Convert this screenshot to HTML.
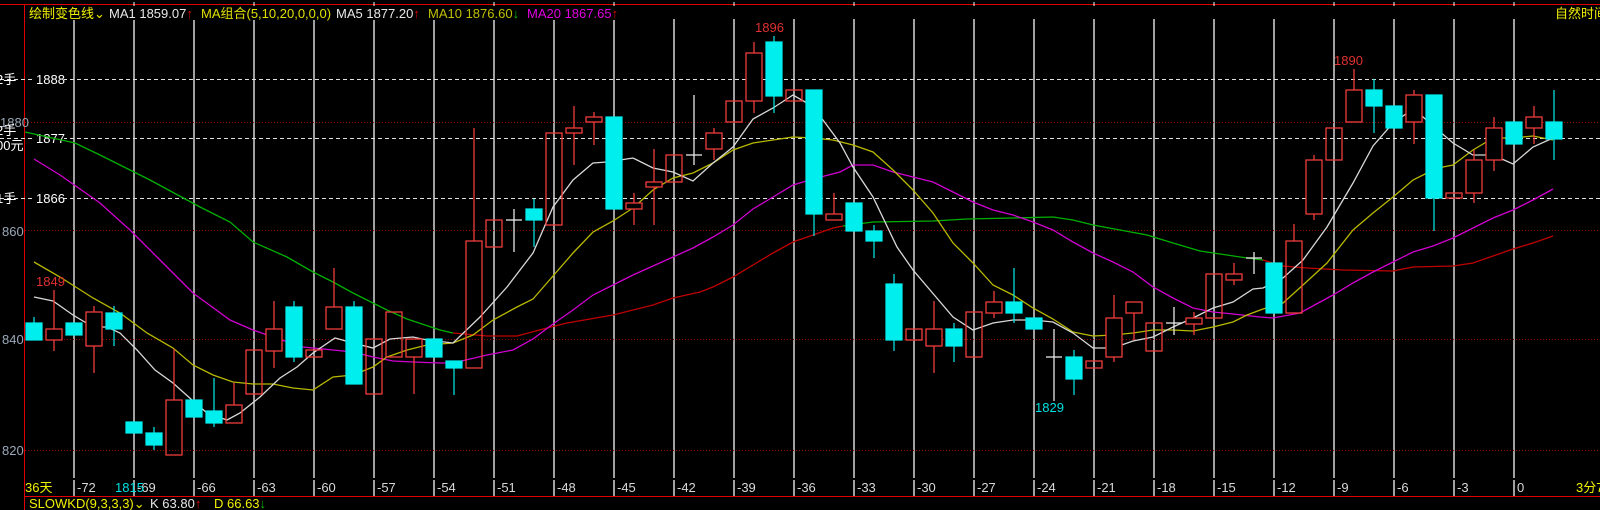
<!DOCTYPE html>
<html><head><meta charset="utf-8"><style>
html,body{margin:0;padding:0;background:#000;}
svg{display:block}
text{font-family:"Liberation Sans","Noto Sans CJK SC",sans-serif;font-size:12.5px}
</style></head><body>
<svg width="1600" height="510" viewBox="0 0 1600 510" xmlns="http://www.w3.org/2000/svg">
<rect width="1600" height="510" fill="#000"/>
<line x1="0" y1="4.5" x2="1600" y2="4.5" stroke="#e00000" stroke-width="1"/>
<line x1="24.5" y1="4" x2="24.5" y2="510" stroke="#e00000" stroke-width="1"/>
<line x1="24" y1="496.5" x2="1600" y2="496.5" stroke="#e00000" stroke-width="1"/>
<g stroke="#c8c8c8" stroke-width="1.6">
<line x1="74" y1="19" x2="74" y2="478"/><line x1="134" y1="19" x2="134" y2="478"/><line x1="194" y1="19" x2="194" y2="478"/><line x1="254" y1="19" x2="254" y2="478"/><line x1="314" y1="19" x2="314" y2="478"/><line x1="374" y1="19" x2="374" y2="478"/><line x1="434" y1="19" x2="434" y2="478"/><line x1="494" y1="19" x2="494" y2="478"/><line x1="554" y1="19" x2="554" y2="478"/><line x1="614" y1="19" x2="614" y2="478"/><line x1="674" y1="19" x2="674" y2="478"/><line x1="734" y1="19" x2="734" y2="478"/><line x1="794" y1="19" x2="794" y2="478"/><line x1="854" y1="19" x2="854" y2="478"/><line x1="914" y1="19" x2="914" y2="478"/><line x1="974" y1="19" x2="974" y2="478"/><line x1="1034" y1="19" x2="1034" y2="478"/><line x1="1094" y1="19" x2="1094" y2="478"/><line x1="1154" y1="19" x2="1154" y2="478"/><line x1="1214" y1="19" x2="1214" y2="478"/><line x1="1274" y1="19" x2="1274" y2="478"/><line x1="1334" y1="19" x2="1334" y2="478"/><line x1="1394" y1="19" x2="1394" y2="478"/><line x1="1454" y1="19" x2="1454" y2="478"/><line x1="1514" y1="19" x2="1514" y2="478"/>
</g>
<g stroke="#c8c8c8" stroke-width="1.6">
<line x1="74" y1="480" x2="74" y2="496"/><line x1="134" y1="480" x2="134" y2="496"/><line x1="194" y1="480" x2="194" y2="496"/><line x1="254" y1="480" x2="254" y2="496"/><line x1="314" y1="480" x2="314" y2="496"/><line x1="374" y1="480" x2="374" y2="496"/><line x1="434" y1="480" x2="434" y2="496"/><line x1="494" y1="480" x2="494" y2="496"/><line x1="554" y1="480" x2="554" y2="496"/><line x1="614" y1="480" x2="614" y2="496"/><line x1="674" y1="480" x2="674" y2="496"/><line x1="734" y1="480" x2="734" y2="496"/><line x1="794" y1="480" x2="794" y2="496"/><line x1="854" y1="480" x2="854" y2="496"/><line x1="914" y1="480" x2="914" y2="496"/><line x1="974" y1="480" x2="974" y2="496"/><line x1="1034" y1="480" x2="1034" y2="496"/><line x1="1094" y1="480" x2="1094" y2="496"/><line x1="1154" y1="480" x2="1154" y2="496"/><line x1="1214" y1="480" x2="1214" y2="496"/><line x1="1274" y1="480" x2="1274" y2="496"/><line x1="1334" y1="480" x2="1334" y2="496"/><line x1="1394" y1="480" x2="1394" y2="496"/><line x1="1454" y1="480" x2="1454" y2="496"/><line x1="1514" y1="480" x2="1514" y2="496"/>
</g>
<g stroke="#ffffff" stroke-width="1">
<line x1="134" y1="2" x2="134" y2="6"/><line x1="254" y1="2" x2="254" y2="6"/><line x1="374" y1="2" x2="374" y2="6"/><line x1="494" y1="2" x2="494" y2="6"/><line x1="614" y1="2" x2="614" y2="6"/><line x1="734" y1="2" x2="734" y2="6"/><line x1="854" y1="2" x2="854" y2="6"/><line x1="974" y1="2" x2="974" y2="6"/><line x1="1094" y1="2" x2="1094" y2="6"/><line x1="1214" y1="2" x2="1214" y2="6"/><line x1="1334" y1="2" x2="1334" y2="6"/><line x1="1394" y1="2" x2="1394" y2="6"/><line x1="1454" y1="2" x2="1454" y2="6"/><line x1="1514" y1="2" x2="1514" y2="6"/>
</g>
<g stroke="#900000" stroke-width="1" stroke-dasharray="1,2">
<line x1="25" y1="122.5" x2="1600" y2="122.5"/><line x1="25" y1="230.5" x2="1600" y2="230.5"/><line x1="25" y1="339.5" x2="1600" y2="339.5"/><line x1="25" y1="450.5" x2="1600" y2="450.5"/>
</g>
<g stroke="#e0e0e0" stroke-width="1" stroke-dasharray="4,3">
<line x1="0" y1="79.5" x2="1600" y2="79.5"/><line x1="0" y1="138.5" x2="1600" y2="138.5"/><line x1="0" y1="198.5" x2="1600" y2="198.5"/>
</g>
<g fill="#9aa8b8">
<text x="0" y="127" style="font-size:13px">1880</text>
<text x="2" y="236" style="font-size:13px">860</text>
<text x="2" y="344" style="font-size:13px">840</text>
<text x="2" y="455" style="font-size:13px">820</text>
</g>
<g fill="#ffffff">
<text x="-4" y="84" style="font-size:13px">2手</text>
<text x="-4" y="135" style="font-size:13px">2手</text>
<text x="-4" y="150" style="font-size:13px">00元</text>
<text x="-4" y="203" style="font-size:13px">1手</text>
<rect x="34" y="72" width="30" height="14" fill="#000"/>
<rect x="34" y="131" width="30" height="14" fill="#000"/>
<rect x="34" y="191" width="30" height="14" fill="#000"/>
<text x="36" y="84" style="font-size:13px">1888</text>
<text x="36" y="143" style="font-size:13px">1877</text>
<text x="36" y="203" style="font-size:13px">1866</text>
</g>
<g fill="none" stroke-width="1.3">
<polyline stroke="#00b000" points="25,132 75,143 100,155 150,180 200,207 230,222 253,242 287,257 313,272 333,282 353,293 373,303 387,310 407,319 440,330 453,333"/>
<polyline stroke="#c00000" points="453,333 487,336 517,336 547,328 567,323 613,315 653,305 673,298 700,292 713,287 733,277 753,265 773,253 793,242 813,235 833,228 843,226"/>
<polyline stroke="#00b000" points="843,226 873,222 933,221 967,219 1013,218 1053,217 1073,220 1093,225 1120,230 1147,235 1173,243 1200,251 1227,255 1240,257 1263,260"/>
<polyline stroke="#c00000" points="1263,260 1283,266 1307,268 1343,270 1393,271 1413,267 1453,266 1473,263 1493,256 1513,249 1533,243 1553,236"/>
<polyline stroke="#d000d0" points="34,159 60,175 100,203 130,230 160,260 193,293 230,320 253,330 273,337 303,347 333,350 353,352 373,357 393,361 413,362 440,363 453,363 487,355 513,350 533,339 553,324 573,310 593,295 613,285 633,275 653,266 673,257 693,248 713,237 733,225 753,209 773,197 793,185 813,179 840,172 853,165 873,165 893,172 913,177 933,182 953,192 973,202 993,210 1013,215 1033,222 1053,230 1073,242 1093,253 1113,262 1133,272 1153,287 1173,298 1193,308 1213,312 1233,314 1260,317 1273,318 1300,313 1333,295 1353,283 1373,272 1393,262 1413,252 1433,246 1453,238 1473,228 1493,218 1513,210 1533,200 1553,189"/>
<polyline stroke="#b8b800" points="34,262 60,277 93,298 120,313 147,333 173,348 193,365 213,375 233,382 253,384 273,384 293,388 313,390 333,377 353,375 373,367 387,357 407,350 427,345 453,343 473,335 493,320 517,307 533,299 553,276 573,253 593,232 613,221 633,208 653,190 673,178 693,173 713,163 733,150 753,143 773,140 793,137 813,138 833,140 853,145 873,152 893,170 913,190 933,213 953,243 973,263 993,285 1013,295 1033,308 1053,319 1073,332 1093,336 1113,335 1133,333 1153,330 1173,330 1193,331 1213,327 1233,322 1247,315 1263,309 1283,303 1303,285 1327,263 1353,230 1373,213 1393,197 1413,180 1427,173 1443,167 1453,165 1473,150 1493,138 1513,138 1533,136 1553,140"/>
<polyline stroke="#d8d8d8" points="34,297 53,301 73,315 93,327 107,327 120,333 137,350 155,370 173,383 192,400 207,413 227,420 240,413 260,397 280,378 297,367 313,353 335,338 353,343 373,348 390,339 413,337 427,340 453,343 480,317 507,287 533,253 553,207 573,180 593,163 607,162 633,158 653,168 673,172 693,181 713,163 733,147 753,119 773,108 793,95 807,103 823,120 840,143 853,167 873,197 897,247 913,270 953,317 973,330 993,323 1013,320 1033,320 1053,322 1073,333 1093,348 1113,348 1133,341 1153,337 1173,327 1193,318 1213,308 1233,302 1253,289 1263,288 1283,278 1303,260 1327,227 1353,183 1373,146 1393,123 1413,109 1423,117 1453,143 1473,155 1493,155 1513,164 1533,147 1553,138"/>
</g>
<g fill="#00eeee" stroke="#00eeee" stroke-width="1.2">
<line x1="34" y1="317" x2="34" y2="340"/><rect x="26" y="323" width="16" height="17"/>
<rect x="66" y="323" width="16" height="12"/>
<line x1="114" y1="306" x2="114" y2="346"/><rect x="106" y="313" width="16" height="16"/>
<rect x="126" y="422" width="16" height="11"/>
<line x1="154" y1="427" x2="154" y2="450"/><rect x="146" y="433" width="16" height="12"/>
<rect x="186" y="400" width="16" height="17"/>
<line x1="214" y1="378" x2="214" y2="427"/><rect x="206" y="411" width="16" height="12"/>
<line x1="294" y1="301" x2="294" y2="362"/><rect x="286" y="307" width="16" height="50"/>
<line x1="354" y1="301" x2="354" y2="384"/><rect x="346" y="307" width="16" height="77"/>
<rect x="426" y="339" width="16" height="18"/>
<line x1="454" y1="361" x2="454" y2="395"/><rect x="446" y="361" width="16" height="7"/>
<line x1="534" y1="199" x2="534" y2="247"/><rect x="526" y="209" width="16" height="11"/>
<rect x="606" y="117" width="16" height="92"/>
<line x1="774" y1="36" x2="774" y2="113"/><rect x="766" y="42" width="16" height="54"/>
<line x1="814" y1="90" x2="814" y2="236"/><rect x="806" y="90" width="16" height="124"/>
<rect x="846" y="203" width="16" height="28"/>
<line x1="874" y1="225" x2="874" y2="258"/><rect x="866" y="231" width="16" height="10"/>
<line x1="894" y1="274" x2="894" y2="351"/><rect x="886" y="284" width="16" height="56"/>
<line x1="954" y1="323" x2="954" y2="362"/><rect x="946" y="329" width="16" height="17"/>
<line x1="1014" y1="268" x2="1014" y2="323"/><rect x="1006" y="302" width="16" height="11"/>
<rect x="1026" y="318" width="16" height="11"/>
<line x1="1074" y1="350" x2="1074" y2="395"/><rect x="1066" y="357" width="16" height="22"/>
<rect x="1266" y="263" width="16" height="50"/>
<line x1="1374" y1="79" x2="1374" y2="133"/><rect x="1366" y="90" width="16" height="16"/>
<rect x="1386" y="106" width="16" height="22"/>
<line x1="1434" y1="95" x2="1434" y2="231"/><rect x="1426" y="95" width="16" height="103"/>
<rect x="1506" y="122" width="16" height="22"/>
<line x1="1554" y1="90" x2="1554" y2="160"/><rect x="1546" y="122" width="16" height="17"/>
</g>
<g fill="none" stroke="#f03c3c" stroke-width="1.3">
<line x1="54" y1="290" x2="54" y2="351"/><rect x="46" y="329" width="16" height="11" fill="#000"/>
<line x1="94" y1="306" x2="94" y2="373"/><rect x="86" y="312" width="16" height="34" fill="#000"/>
<line x1="174" y1="349" x2="174" y2="400"/><rect x="166" y="400" width="16" height="55"/>
<line x1="234" y1="383" x2="234" y2="405"/><rect x="226" y="405" width="16" height="18"/>
<rect x="246" y="350" width="16" height="44"/>
<line x1="274" y1="301" x2="274" y2="368"/><rect x="266" y="329" width="16" height="22" fill="#000"/>
<rect x="306" y="350" width="16" height="7"/>
<line x1="334" y1="268" x2="334" y2="307"/><rect x="326" y="307" width="16" height="22"/>
<rect x="366" y="339" width="16" height="55"/>
<rect x="386" y="312" width="16" height="45"/>
<line x1="414" y1="357" x2="414" y2="394"/><rect x="406" y="339" width="16" height="18"/>
<line x1="474" y1="128" x2="474" y2="241"/><rect x="466" y="241" width="16" height="127"/>
<rect x="486" y="220" width="16" height="27"/>
<rect x="546" y="133" width="16" height="92"/>
<line x1="574" y1="106" x2="574" y2="165"/><rect x="566" y="128" width="16" height="5" fill="#000"/>
<line x1="594" y1="112" x2="594" y2="145"/><rect x="586" y="117" width="16" height="5" fill="#000"/>
<line x1="634" y1="193" x2="634" y2="225"/><rect x="626" y="203" width="16" height="6" fill="#000"/>
<line x1="654" y1="149" x2="654" y2="225"/><rect x="646" y="182" width="16" height="5" fill="#000"/>
<rect x="666" y="155" width="16" height="27"/>
<line x1="714" y1="128" x2="714" y2="160"/><rect x="706" y="133" width="16" height="16" fill="#000"/>
<rect x="726" y="101" width="16" height="21"/>
<line x1="754" y1="42" x2="754" y2="113"/><rect x="746" y="53" width="16" height="48" fill="#000"/>
<rect x="786" y="90" width="16" height="11"/>
<line x1="834" y1="193" x2="834" y2="214"/><rect x="826" y="214" width="16" height="6"/>
<rect x="906" y="329" width="16" height="11"/>
<line x1="934" y1="301" x2="934" y2="373"/><rect x="926" y="329" width="16" height="17" fill="#000"/>
<rect x="966" y="312" width="16" height="45"/>
<line x1="994" y1="291" x2="994" y2="318"/><rect x="986" y="302" width="16" height="11" fill="#000"/>
<rect x="1086" y="361" width="16" height="7"/>
<line x1="1114" y1="295" x2="1114" y2="362"/><rect x="1106" y="318" width="16" height="39" fill="#000"/>
<line x1="1134" y1="313" x2="1134" y2="340"/><rect x="1126" y="302" width="16" height="11"/>
<rect x="1146" y="323" width="16" height="28"/>
<line x1="1194" y1="312" x2="1194" y2="335"/><rect x="1186" y="318" width="16" height="6" fill="#000"/>
<rect x="1206" y="274" width="16" height="44"/>
<line x1="1234" y1="263" x2="1234" y2="285"/><rect x="1226" y="274" width="16" height="6" fill="#000"/>
<line x1="1294" y1="224" x2="1294" y2="241"/><rect x="1286" y="241" width="16" height="72"/>
<line x1="1314" y1="155" x2="1314" y2="220"/><rect x="1306" y="160" width="16" height="54" fill="#000"/>
<rect x="1326" y="128" width="16" height="32"/>
<line x1="1354" y1="69" x2="1354" y2="90"/><rect x="1346" y="90" width="16" height="32"/>
<line x1="1414" y1="90" x2="1414" y2="144"/><rect x="1406" y="95" width="16" height="27" fill="#000"/>
<rect x="1446" y="193" width="16" height="5"/>
<line x1="1474" y1="150" x2="1474" y2="203"/><rect x="1466" y="160" width="16" height="33" fill="#000"/>
<line x1="1494" y1="117" x2="1494" y2="171"/><rect x="1486" y="128" width="16" height="32" fill="#000"/>
<line x1="1534" y1="106" x2="1534" y2="144"/><rect x="1526" y="117" width="16" height="11" fill="#000"/>
</g>
<g stroke="#e8e8e8" stroke-width="1.3">
<line x1="514" y1="209" x2="514" y2="252"/><line x1="506" y1="220" x2="522" y2="220"/>
<line x1="694" y1="95" x2="694" y2="165"/><line x1="686" y1="155" x2="702" y2="155"/>
<line x1="1054" y1="329" x2="1054" y2="401"/><line x1="1046" y1="357" x2="1062" y2="357"/>
<line x1="1174" y1="307" x2="1174" y2="335"/><line x1="1166" y1="323" x2="1182" y2="323"/>
<line x1="1254" y1="252" x2="1254" y2="274"/><line x1="1246" y1="258" x2="1262" y2="258"/>
</g>
<text x="36" y="286" fill="#e03030" style="font-size:13px">1849</text>
<text x="755" y="32" fill="#e03030" style="font-size:13px">1896</text>
<text x="1334" y="65" fill="#e03030" style="font-size:13px">1890</text>
<text x="1035" y="412" fill="#00e0e0" style="font-size:13px">1829</text>
<rect x="25" y="6" width="620" height="14" fill="#000"/>
<text x="29" y="18" fill="#f0f000" style="font-size:13px">绘制变色线⌄</text>
<text x="109" y="18" fill="#e8e8e8" style="font-size:13px">MA1 1859.07<tspan fill="#e00000">↑</tspan></text>
<text x="201" y="18" fill="#e0e000" style="font-size:13px">MA组合(5,10,20,0,0,0)</text>
<text x="336" y="18" fill="#e8e8e8" style="font-size:13px">MA5 1877.20<tspan fill="#e00000">↑</tspan></text>
<text x="428" y="18" fill="#c0c000" style="font-size:13px">MA10 1876.60<tspan fill="#00c000">↓</tspan></text>
<text x="527" y="18" fill="#e000e0" style="font-size:13px">MA20 1867.65<tspan fill="#e00000">↑</tspan></text>
<text x="1555" y="18" fill="#f0f000" style="font-size:13px">自然时间</text>
<g fill="#d8d8d8">
<text x="77" y="492" style="font-size:13px">-72</text>
<text x="137" y="492" style="font-size:13px">-69</text>
<text x="197" y="492" style="font-size:13px">-66</text>
<text x="257" y="492" style="font-size:13px">-63</text>
<text x="317" y="492" style="font-size:13px">-60</text>
<text x="377" y="492" style="font-size:13px">-57</text>
<text x="437" y="492" style="font-size:13px">-54</text>
<text x="497" y="492" style="font-size:13px">-51</text>
<text x="557" y="492" style="font-size:13px">-48</text>
<text x="617" y="492" style="font-size:13px">-45</text>
<text x="677" y="492" style="font-size:13px">-42</text>
<text x="737" y="492" style="font-size:13px">-39</text>
<text x="797" y="492" style="font-size:13px">-36</text>
<text x="857" y="492" style="font-size:13px">-33</text>
<text x="917" y="492" style="font-size:13px">-30</text>
<text x="977" y="492" style="font-size:13px">-27</text>
<text x="1037" y="492" style="font-size:13px">-24</text>
<text x="1097" y="492" style="font-size:13px">-21</text>
<text x="1157" y="492" style="font-size:13px">-18</text>
<text x="1217" y="492" style="font-size:13px">-15</text>
<text x="1277" y="492" style="font-size:13px">-12</text>
<text x="1337" y="492" style="font-size:13px">-9</text>
<text x="1397" y="492" style="font-size:13px">-6</text>
<text x="1457" y="492" style="font-size:13px">-3</text>
<text x="1517" y="492" style="font-size:13px">0</text>
</g>
<text x="115" y="492" fill="#00e0e0" style="font-size:13px">1815</text>
<text x="25" y="492" fill="#f0f000" style="font-size:13px">36天</text>
<text x="1576" y="492" fill="#f0f000" style="font-size:13px">3分7</text>
<text x="29" y="508" fill="#f0f000" style="font-size:13px">SLOWKD(9,3,3,3)⌄</text>
<text x="150" y="508" fill="#e8e8e8" style="font-size:13px">K 63.80<tspan fill="#e00000">↑</tspan></text>
<text x="214" y="508" fill="#f0f000" style="font-size:13px">D 66.63<tspan fill="#00c000">↓</tspan></text>
</svg>
</body></html>
